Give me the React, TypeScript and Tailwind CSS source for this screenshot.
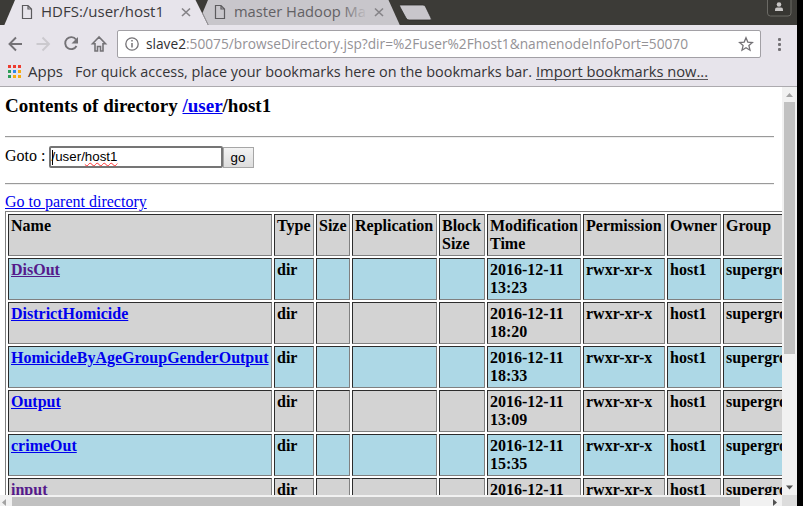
import React from "react";

const ui = "font-['Open_Sans','Noto_Sans',sans-serif]";

function Label({ x, y, size, width, fill, children }: { x: number; y: number; size: number; width: number; fill: string; children: string }) {
  return (
    <text x={x} y={y} fontSize={size} textLength={width} lengthAdjust="spacingAndGlyphs" fill={fill}>
      {children}
    </text>
  );
}

function PageIcon({ x }: { x: number }) {
  return <path d={`M${x + 0.5} 5.500h5.500l3.500 3.500v9.500h-9zM${x + 6} 5.500v3.500h3.500`} fill="none" stroke="#5c5b5e" strokeWidth="1.2" />;
}

function TabStrip() {
  return (
    <header className="h-[25px] bg-[#3c3b37]">
      <svg className={`block ${ui}`} width="797" height="27" viewBox="0 0 797 27">
        <path d="M0 25.500H797" stroke="#2c2b29" />
        <path d="M3.500 27L15 0H195.500L209 27z" fill="#e7e4eb" />
        <path d="M208 0H388.500L400 25.500H208.500L202.500 13z" fill="#c8c6cb" />
        <path d="M202.500 13L208.500 25.500H400" stroke="#929094" fill="none" />
        <path d="M400.500 5H423q2 0 2.700 2L431 18q1 2-1 2H409q-2 0-3-2L400 7q-1-2 .5-2z" fill="#c8c6cb" stroke="#2f2e2b" strokeWidth=".8" />
        <PageIcon x={22} />
        <PageIcon x={215} />
        <Label x={41} y={17} size={14.5} width={123} fill="#3b3a3d">HDFS:/user/host1</Label>
        <defs>
          <linearGradient id="fade" x1="234" x2="368" gradientUnits="userSpaceOnUse">
            <stop offset=".8" stopColor="#626064" />
            <stop offset="1" stopColor="#c8c6cb" />
          </linearGradient>
        </defs>
        <Label x={234} y={17} size={14.5} width={132} fill="url(#fade)">master Hadoop Ma</Label>
        <path d="M182 8.500l8 7.500m0-7.500l-8 7.500M375 8.500l8 7.500m0-7.500l-8 7.500" stroke="#858387" strokeWidth="1.600" />
        <path d="M767.500 0v13q0 3 3 3H788q3 0 3-3V0" fill="#373632" stroke="#6b6a65" />
        <circle cx="779" cy="4.500" r="2.300" fill="#c8c6c5" />
        <path d="M775 11V9.500q0-2 2-2h4q2 0 2 2V11z" fill="#c8c6c5" />
      </svg>
    </header>
  );
}

function Toolbar() {
  return (
    <div className="relative h-[62px] border-b border-[#acaaae] bg-[#e7e4eb]">
      <svg className={`block ${ui}`} width="797" height="61" viewBox="0 25 797 61">
        <path d="M22 44H9.500m6.500-6.500l-6.500 6.500 6.500 6.500" stroke="#747276" strokeWidth="1.900" fill="none" />
        <path d="M36.500 44H49m-6.500-6.500l6.500 6.500-6.500 6.500" stroke="#cbc9ce" strokeWidth="1.900" fill="none" />
        <path d="M76 39.500A6 6 0 1 0 76.500 46" stroke="#747276" strokeWidth="1.900" fill="none" />
        <path d="M78 37v6.500h-6.500z" fill="#747276" />
        <path d="M99 37l-6.500 6.800h2.500v7.200h2.500v-4.500h3v4.500h2.500v-7.200h2.500z" stroke="#747276" strokeWidth="1.600" fill="none" />
        <rect x="117.500" y="30.500" width="643" height="27" rx="1.500" fill="#fff" stroke="#a2a0a5" />
        <circle cx="132" cy="44" r="6.200" stroke="#747276" strokeWidth="1.300" fill="none" />
        <path d="M132 43v4.500M132 40v1.600" stroke="#747276" strokeWidth="1.500" />
        <Label x={146} y={49} size={14.5} width={40} fill="#303033">slave2</Label>
        <Label x={186} y={49} size={14.5} width={502} fill="#949296">:50075/browseDirectory.jsp?dir=%2Fuser%2Fhost1&namenodeInfoPort=50070</Label>
        <path d="M746 37.800l1.800 4.300 4.600.4-3.500 3.100 1.100 4.600-4-2.500-4 2.500 1.100-4.600-3.500-3.100 4.600-.4z" fill="none" stroke="#747276" strokeWidth="1.300" />
        <g fill="#747276">
          <rect x="778" y="38" width="3" height="3" rx="1" />
          <rect x="778" y="43" width="3" height="3" rx="1" />
          <rect x="778" y="48" width="3" height="3" rx="1" />
        </g>
        <path d="M8 65h3v3H8zM13 65h3v3h-3zM18 65h3v3h-3z" fill="#ed3b2f" />
        <path d="M8 70h3v3H8zM8 75h3v3H8z" fill="#2f9e58" />
        <path d="M13 70h3v3h-3z" fill="#2d87ed" />
        <path d="M18 70h3v3h-3zM13 75h3v3h-3zM18 75h3v3h-3z" fill="#f5ab12" />
        <Label x={28} y={77} size={14.5} width={35} fill="#353437">Apps</Label>
        <Label x={75} y={77} size={14.5} width={457} fill="#353437">For quick access, place your bookmarks here on the bookmarks bar.</Label>
        <Label x={536} y={77} size={14.5} width={172} fill="#353437">Import bookmarks now...</Label>
        <path d="M536 79.500h172" stroke="#59575b" />
      </svg>
    </div>
  );
}

const headings = ["Name", "Type", "Size", "Replication", "Block Size", "Modification Time", "Permission", "Owner", "Group"];
const files = [
  { name: "DisOut", time: "13:23", visited: true },
  { name: "DistrictHomicide", time: "18:20", visited: false },
  { name: "HomicideByAgeGroupGenderOutput", time: "18:33", visited: false },
  { name: "Output", time: "13:09", visited: false },
  { name: "crimeOut", time: "15:35", visited: false },
  { name: "input", time: "12:50", visited: true },
];

function Cell({ children, blue }: { children?: React.ReactNode; blue: boolean }) {
  return (
    <div className={`h-[42px] overflow-hidden border border-t-[#2c2c2c] border-r-[#808080] border-b-[#808080] border-l-[#2c2c2c] p-[2px] ${blue ? "bg-[#add8e6]" : "bg-[#d3d3d3]"}`}>
      {children}
    </div>
  );
}

function Listing() {
  return (
    <div className="grid w-[812px] grid-cols-[264px_40px_34px_85px_46px_94px_82px_54px_86px] gap-[2px] border border-[#808080] p-[2px] text-[16px] leading-[18px] font-bold">
      {headings.map((h) => (
        <Cell key={h} blue={false}>{h}</Cell>
      ))}
      {files.map((f, i) => {
        const blue = i % 2 === 0;
        return (
          <React.Fragment key={f.name}>
            <Cell blue={blue}>
              <a className={`underline ${f.visited ? "text-[#551a8b]" : "text-[#0000ee]"}`}>{f.name}</a>
            </Cell>
            <Cell blue={blue}>dir</Cell>
            <Cell blue={blue} />
            <Cell blue={blue} />
            <Cell blue={blue} />
            <Cell blue={blue}>2016-12-11<br />{f.time}</Cell>
            <Cell blue={blue}>rwxr-xr-x</Cell>
            <Cell blue={blue}>host1</Cell>
            <Cell blue={blue}>supergroup</Cell>
          </React.Fragment>
        );
      })}
    </div>
  );
}

function Rule() {
  return <div className="h-[2px] w-[769px] border-t border-b border-t-[#9a9a9a] border-b-[#eeeeee]" />;
}

export default function App() {
  return (
    <div className="h-[506px] w-[803px] overflow-hidden bg-black">
      <div className="flex h-full w-[797px] flex-col overflow-hidden bg-white">
        <TabStrip />
        <Toolbar />
        <div className="flex h-[408px] shrink-0">
          <main className="h-[408px] w-[782px] overflow-hidden pl-[5px] font-['Liberation_Serif',serif] text-[16px] leading-[18px] text-black">
            <h1 className="mt-[8px] h-[41px] text-[19px] leading-[21px] font-bold">
              Contents of directory <a className="text-[#0000ee] underline">/user</a>/host1
            </h1>
            <Rule />
            <form className="mt-[8px] flex h-[37px] items-start">
              <span className="w-[43.5px] pt-[1px]">Goto :</span>
              <div className="flex h-[22px] w-[174px] items-start rounded-[2px] border-2 border-[#757575] bg-white pl-px font-['Liberation_Sans',sans-serif] text-[13.33px] leading-[17px]">
                <span className="mt-[2px] h-[15px] w-px bg-black" />
                <span className="-ml-px">/user/<span className="underline decoration-[#f33] decoration-wavy decoration-1 underline-offset-[1px] [text-decoration-skip-ink:none]">host1</span></span>
              </div>
              <button type="button" className="mt-px h-[21px] w-[31px] border border-[#a6a6a6] bg-linear-to-b from-[#f3f3f3] to-[#dddddd] font-['Liberation_Sans',sans-serif] text-[13.33px] leading-[17px]">go</button>
            </form>
            <Rule />
            <a className="mt-[8px] block h-[18px] text-[#0000ee] underline">Go to parent directory</a>
            <Listing />
          </main>
          <div className="flex w-[15px] flex-col items-center bg-[#f1f1f1]">
            <svg className="h-[15px] w-[15px]" viewBox="0 0 15 15"><path d="M4 10l3.500-4 3.500 4z" fill="#a3a3a3" /></svg>
            <div className="h-[252px] w-[11px] bg-[#c1c1c1]" />
            <svg className="mt-auto h-[15px] w-[15px]" viewBox="0 0 15 15"><path d="M4 5.500h7L7.500 9.500z" fill="#505050" /></svg>
          </div>
        </div>
        <div className="flex h-[11px] shrink-0 bg-[#f1f1f1]">
          <svg className="h-[11px] w-[12px]" viewBox="0 0 12 11"><path d="M6 4v7L2 7.500z" fill="#a3a3a3" /></svg>
          <div className="mt-[2px] w-[728px] bg-[#c1c1c1]" />
          <svg className="h-[11px] w-[42px]" viewBox="0 0 42 11"><path d="M33 4v7l4-3.500z" fill="#505050" /></svg>
          <div className="w-[15px] bg-[#dcdcdc]" />
        </div>
      </div>
    </div>
  );
}
